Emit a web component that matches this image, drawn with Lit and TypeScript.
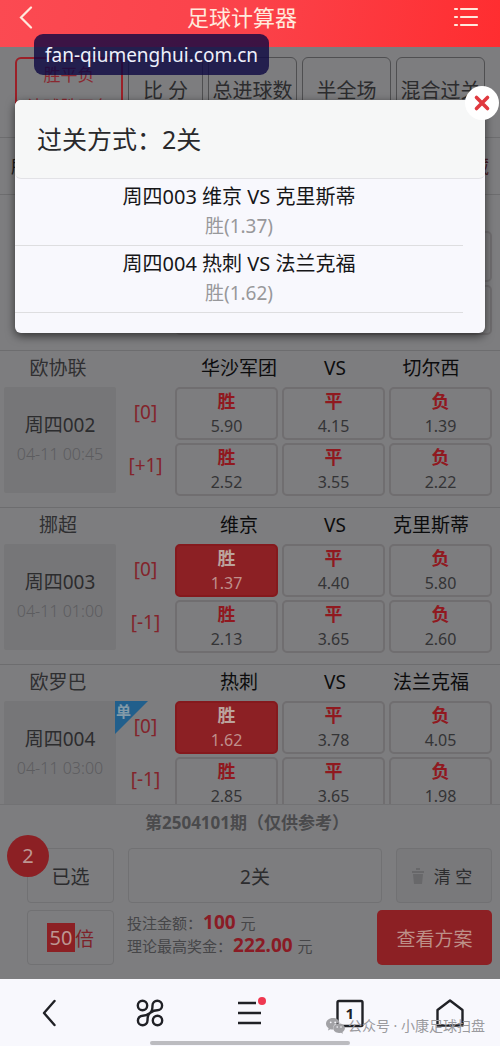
import { LitElement, html, css, svg, nothing } from "lit";
import { customElement, state } from "lit/decorators.js";
import { classMap } from "lit/directives/class-map.js";

interface Match {
  league: string;
  home: string;
  away: string;
  no: string;
  time: string;
  single?: boolean;
  lines: { handicap: string; odds: string[] }[];
}

const OUTCOMES = ["胜", "平", "负"];

const MATCHES: Match[] = [
  {
    league: "欧协联", home: "华沙军团", away: "切尔西", no: "周四002", time: "04-11 00:45",
    lines: [
      { handicap: "[0]", odds: ["5.90", "4.15", "1.39"] },
      { handicap: "[+1]", odds: ["2.52", "3.55", "2.22"] },
    ],
  },
  {
    league: "挪超", home: "维京", away: "克里斯蒂", no: "周四003", time: "04-11 01:00",
    lines: [
      { handicap: "[0]", odds: ["1.37", "4.40", "5.80"] },
      { handicap: "[-1]", odds: ["2.13", "3.65", "2.60"] },
    ],
  },
  {
    league: "欧罗巴", home: "热刺", away: "法兰克福", no: "周四004", time: "04-11 03:00", single: true,
    lines: [
      { handicap: "[0]", odds: ["1.62", "3.78", "4.05"] },
      { handicap: "[-1]", odds: ["2.85", "3.65", "1.98"] },
    ],
  },
];

const PICKS = [
  { title: "周四003 维京 VS 克里斯蒂", pick: "胜(1.37)" },
  { title: "周四004 热刺 VS 法兰克福", pick: "胜(1.62)" },
];

const base = css`
  * { box-sizing: border-box; }
  button, input {
    font: inherit;
    color: inherit;
    margin: 0;
    padding: 0;
    border: 0;
    background: none;
  }
  button { cursor: pointer; }
`;

@customElement("match-card")
class MatchCard extends LitElement {
  static properties = { match: { attribute: false } };
  declare match: Match;

  @state() private picked = new Set<string>(["周四003-0-0", "周四004-0-0"]);

  static styles = [base, css`
    :host { display: block; border-top: 1px solid #6d6d6f; padding-bottom: 11px; }
    .head {
      display: grid;
      grid-template-columns: 116px 1fr;
      align-items: center;
      height: 34px;
      margin-bottom: 2px;
      font-size: 19px;
      line-height: 32px;
      text-align: center;
      color: #0c0c0d;
    }
    .league { color: #2f2f31; }
    .teams { display: grid; grid-template-columns: 1fr 1fr 1fr; padding: 0 21px 0 75px; white-space: nowrap; }
    .body { display: grid; grid-template-columns: 112px 55px 1fr; padding: 0 8px 0 4px; column-gap: 2px; position: relative; }
    .meta {
      display: flex;
      flex-direction: column;
      align-items: center;
      justify-content: center;
      background: #767678;
      margin-bottom: 3px;
      font-size: 19px;
      line-height: 29px;
      color: #2c2c2e;
      border-radius: 2px;
    }
    .time { font-size: 16px; color: #5c5c5f; font-weight: 300; white-space: nowrap; }
    .lines { display: grid; row-gap: 3px; }
    .handicap { font-size: 19px; line-height: 50px; text-align: center; color: #83242b; height: 53px; }
    .row { display: grid; grid-template-columns: 1fr 1fr 1fr; column-gap: 4px; }
    .odd {
      height: 53px;
      border: 2px solid #706e70;
      border-radius: 5px;
      display: flex;
      flex-direction: column;
      align-items: center;
      color: #343436;
      font-size: 16px;
      line-height: 27px;
    }
    .odd b { font-size: 18px; line-height: 24px; font-weight: 700; color: #90191f; }
    .odd.on { background: #8c2024; border-color: #85191d; color: #bf8f8b; }
    .odd.on b { color: #bba39c; }
    .flag { position: absolute; left: 115px; top: 0; width: 33px; height: 33px; }
    .flag text { font-size: 15px; font-weight: 700; fill: #839aa8; }
  `];

  private toggle(key: string) {
    const next = new Set(this.picked);
    next.has(key) ? next.delete(key) : next.add(key);
    this.picked = next;
  }

  render() {
    const m = this.match;
    return html`
      <div class="head">
        <span class="league">${m.league}</span>
        <div class="teams"><span>${m.home}</span><span>VS</span><span>${m.away}</span></div>
      </div>
      <div class="body">
        <div class="meta"><span>${m.no}</span><span class="time">${m.time}</span></div>
        <div>
          ${m.lines.map((l) => html`<div class="handicap">${l.handicap}</div>`)}
        </div>
        <div class="lines">
          ${m.lines.map((l, i) => html`<div class="row">
            ${l.odds.map((o, j) => {
              const key = `${m.no}-${i}-${j}`;
              return html`<button class=${classMap({ odd: true, on: this.picked.has(key) })}
                @click=${() => this.toggle(key)}><b>${OUTCOMES[j]}</b>${o}</button>`;
            })}
          </div>`)}
        </div>
        ${m.single ? html`<svg class="flag" viewBox="0 0 33 33">
          <path d="M0 0h33L0 33z" fill="#215f8c" /><text x="1" y="16">单</text></svg>` : nothing}
      </div>
    `;
  }
}

const icon = (body: unknown, size = 32) =>
  html`<svg width=${size} height=${size} viewBox="0 0 32 32" fill="none" stroke="#202126"
    stroke-width="2.4" stroke-linejoin="round" aria-hidden="true">${body}</svg>`;

@customElement("app-root")
class AppRoot extends LitElement {
  @state() private open = true;

  static styles = [base, css`
    :host {
      display: flex;
      flex-direction: column;
      position: relative;
      height: 100vh;
      overflow: hidden;
      background: #7d7d7f;
      font-family: "Noto Sans", "Noto Sans CJK SC", sans-serif;
      color: #2c2c2e;
    }
    .top {
      display: grid;
      grid-template-columns: 52px 1fr 68px;
      align-items: center;
      height: 47px;
      padding-bottom: 14px;
      flex: none;
      background: linear-gradient(100deg, #fb4a52, #fb424a 50%, #ff2d30);
      color: #ffe9dc;
    }
    .top h1 { margin: 0; font-size: 22px; line-height: 32px; font-weight: 400; text-align: center; }
    .top button { display: flex; justify-content: center; }
    .site {
      position: absolute;
      left: 34px;
      top: 34px;
      height: 41px;
      padding: 0 11px;
      border-radius: 9px;
      background: rgba(12, 8, 66, 0.8);
      color: #eef0fb;
      font-size: 19px;
      line-height: 42px;
      z-index: 3;
    }
    .scroll { flex: 1; min-height: 0; overflow: hidden; }
    .tabs { display: grid; grid-template-columns: 108fr 75fr 89fr 89fr 89fr; gap: 5px; padding: 10px 15px 13px; }
    .tab {
      height: 67px;
      border: 1px solid #4f4f51;
      border-radius: 6px;
      font-size: 20px;
      line-height: 28px;
      white-space: nowrap;
      display: flex;
      flex-direction: column;
      align-items: center;
      justify-content: center;
      overflow: hidden;
    }
    .tab.on { border: 2px solid #9b2028; color: #8a2830; font-size: 17px; line-height: 32px; justify-content: flex-start; }
    .filter {
      display: flex;
      justify-content: space-between;
      height: 57px;
      padding: 0 11px;
      border-top: 1px solid #6d6d6f;
      font-size: 18px;
      line-height: 56px;
      color: #1c1c1e;
    }
    .filter button { color: #4d2024; }
    .covered { height: 156px; border-top: 1px solid #6d6d6f; padding: 36px 8px 15px 175px; display: grid; gap: 3px; }
    .covered div { border: 2px solid #706e70; border-radius: 5px; }
    .panel { flex: none; padding: 0 8px 14px 27px; border-top: 1px solid #727274; }
    .period { margin: 0 25px 0 0; font-size: 17px; line-height: 36px; height: 43px; font-weight: 700; color: #4a4a4c; text-align: center; }
    .bar { display: grid; grid-template-columns: 87px 1fr 96px; gap: 14px; height: 55px; }
    .bar.bottom { grid-template-columns: 87px 1fr 115px; margin-top: 7px; gap: 13px; }
    .box {
      border: 1px solid #717173;
      border-radius: 4px;
      font-size: 19px;
      display: flex;
      align-items: center;
      justify-content: center;
      gap: 8px;
      position: relative;
      white-space: nowrap;
    }
    .clear { background: #79797b; font-size: 17px; padding-right: 6px; }
    .count {
      position: absolute;
      left: -21px;
      top: -14px;
      width: 42px;
      height: 42px;
      border-radius: 50%;
      background: #8c2024;
      color: #bd9692;
      line-height: 42px;
      text-align: center;
      font-size: 20px;
    }
    .times { gap: 0; color: #7d2229; }
    .times input { width: 28px; height: 29px; background: #8c2024; color: #bd9692; text-align: center; font-size: 20px; }
    .sum { margin: 0; font-size: 15px; line-height: 24px; color: #464648; white-space: nowrap; }
    .sum p { margin: 0; height: 23px; }
    .sum b { font-size: 19px; color: #8a1b25; margin: 0 1px; }
    .view { background: #8c2024; color: #bd8f88; border-radius: 5px; font-size: 19px; }
    .nav { flex: none; height: 67px; display: grid; grid-template-columns: repeat(5, 1fr); background: #f8f8fd; position: relative; }
    .nav button { display: flex; justify-content: center; padding-top: 18px; }
    .nav text { font-size: 15px; font-weight: 700; fill: #202126; stroke: none; }
    .handle { position: absolute; left: 30%; right: 30%; bottom: 1px; height: 4px; border-radius: 2px; background: #bcbcc0; }
    .mark {
      position: absolute;
      right: 15px;
      bottom: 10px;
      display: flex;
      align-items: center;
      gap: 3px;
      font-size: 14px;
      line-height: 20px;
      color: #9a9a9e;
      white-space: pre;
      pointer-events: none;
    }
    .dialog {
      position: absolute;
      left: 15px;
      right: 15px;
      top: 100px;
      background: #f8f8fd;
      border-radius: 6px;
      padding-bottom: 20px;
      box-shadow: 0 3px 10px rgba(0, 0, 0, 0.6);
      z-index: 2;
    }
    .dialog h2 {
      margin: 0;
      height: 79px;
      padding-left: 22px;
      font-size: 25px;
      line-height: 78px;
      font-weight: 400;
      color: #29292b;
      background: #f6f7f7;
      border-bottom: 1px solid #e2e2e6;
      border-radius: 6px;
    }
    .picks { list-style: none; margin: 0 22px 0 0; padding: 0; text-align: center; }
    .picks li { height: 67px; border-bottom: 1px solid #dedee0; padding-top: 3px; font-size: 20px; line-height: 30px; color: #161618; }
    .picks span { display: block; color: #98989b; font-size: 19px; line-height: 28px; }
    .close {
      position: absolute;
      right: -14px;
      top: -14px;
      width: 34px;
      height: 34px;
      border-radius: 50%;
      background: #fff;
      display: flex;
      align-items: center;
      justify-content: center;
    }
  `];

  private renderDialog() {
    return html`<section class="dialog" role="dialog" aria-labelledby="dt">
      <h2 id="dt">过关方式：2关</h2>
      <ul class="picks">
        ${PICKS.map((p) => html`<li>${p.title}<span>${p.pick}</span></li>`)}
      </ul>
      <button class="close" aria-label="关闭" @click=${() => (this.open = false)}>
        <svg width="18" height="18" viewBox="0 0 18 18" stroke="#e0393f" stroke-width="3.600" stroke-linecap="round">
          <path d="M3.500 3.500l11 11M14.500 3.500L3.500 14.500" />
        </svg>
      </button>
    </section>`;
  }

  render() {
    return html`
      <header class="top">
        <button aria-label="返回"><svg width="16" height="24" viewBox="0 0 16 24" fill="none" stroke="currentColor"
          stroke-width="2.2" stroke-linecap="round"><path d="M13 2.500L3 12.500L13 22.500" /></svg></button>
        <h1>足球计算器</h1>
        <button aria-label="列表"><svg width="26" height="22" viewBox="0 0 26 22" fill="none" stroke="currentColor"
          stroke-width="2.2" stroke-linecap="round"><path d="M2 3h2M8 3h16M2 11h2M8 11h16M2 19h2M8 19h16" /></svg></button>
      </header>
      <div class="site">fan-qiumenghui.com.cn</div>
      <main class="scroll">
        <nav class="tabs">
          <button class="tab on"><span>胜平负</span><span>让球胜平负</span></button>
          <button class="tab">比 分</button>
          <button class="tab">总进球数</button>
          <button class="tab">半全场</button>
          <button class="tab">混合过关</button>
        </nav>
        <div class="filter"><span>所有</span><button>隐藏</button></div>
        <div class="covered"><div></div><div></div></div>
        ${MATCHES.map((m) => html`<match-card .match=${m}></match-card>`)}
      </main>
      <section class="panel">
        <p class="period">第2504101期（仅供参考）</p>
        <div class="bar">
          <button class="box">已选<span class="count">2</span></button>
          <button class="box">2关</button>
          <button class="box clear"><svg width="16" height="20" viewBox="0 0 16 20" fill="#68686a">
            <path d="M2 5h12v2H2zM3 8h10l-1 10H4zM6 2h4v2H6z" /></svg>清 空</button>
        </div>
        <div class="bar bottom">
          <label class="box times"><input aria-label="倍数" value="50" />倍</label>
          <div class="sum">
            <p>投注金额：<b>100</b> 元</p>
            <p>理论最高奖金：<b>222.00</b> 元</p>
          </div>
          <button class="view">查看方案</button>
        </div>
      </section>
      <nav class="nav">
        <button aria-label="后退">${icon(svg`<path d="M20.500 4L10 16L20.500 28" stroke-linecap="round"/>`)}</button>
        <button aria-label="应用">${icon(svg`<circle cx="8.500" cy="8.500" r="4.700"/><circle cx="23.500" cy="23.500" r="4.700"/>
          <path d="M23.300 13.300a4.800 4.800 0 1 0-4.800-4.800c0 5-1 6.500-2.500 7.500s-3 2.700-7.300 2.700a4.800 4.800 0 1 0 4.800 4.800c0-5 1-6.500 2.500-7.500s3-2.700 7.300-2.700z"/>`)}</button>
        <button aria-label="菜单">${icon(svg`<path d="M4 6H22M4 16H27M4 26H27"/><circle cx="28" cy="4" r="4" fill="#ef3850" stroke="none"/>`)}</button>
        <button aria-label="窗口">${icon(svg`<rect x="3.500" y="4" width="25" height="25" rx="1.500"/><text x="11.500" y="22">1</text>`)}</button>
        <button aria-label="主页">${icon(svg`<path d="M3.500 28.500V13L16 3.500L28.500 13V28.500z"/>`)}</button>
        <div class="mark"><svg width="19" height="16" viewBox="0 0 19 16">
          <path d="M7 0C3 0 0 2.600 0 5.800c0 1.900 1 3.400 2.600 4.500L2 12.500l2.500-1.300c1 .3 2 .4 3 .3C6.500 7.500 9.500 4.800 13.600 4.800C13 2 10.300 0 7 0z" fill="#a2a2a6"/>
          <path d="M13 5.500c-3.200 0-5.700 2.100-5.700 4.800S9.800 15 13 15c.7 0 1.400-.1 2-.3l2 1.100-.5-1.900c1.500-.9 2.400-2.200 2.400-3.700C18.900 7.600 16.200 5.500 13 5.500z" fill="#a2a2a6"/>
          <g fill="#f8f8fd"><circle cx="4.700" cy="4.300" r=".9"/><circle cx="9.200" cy="4.300" r=".9"/><circle cx="11.200" cy="9" r=".8"/><circle cx="15" cy="9" r=".8"/></g>
        </svg><span>公众号 · 小康足球扫盘</span></div>
        <div class="handle"></div>
      </nav>
      ${this.open ? this.renderDialog() : nothing}
    `;
  }
}
